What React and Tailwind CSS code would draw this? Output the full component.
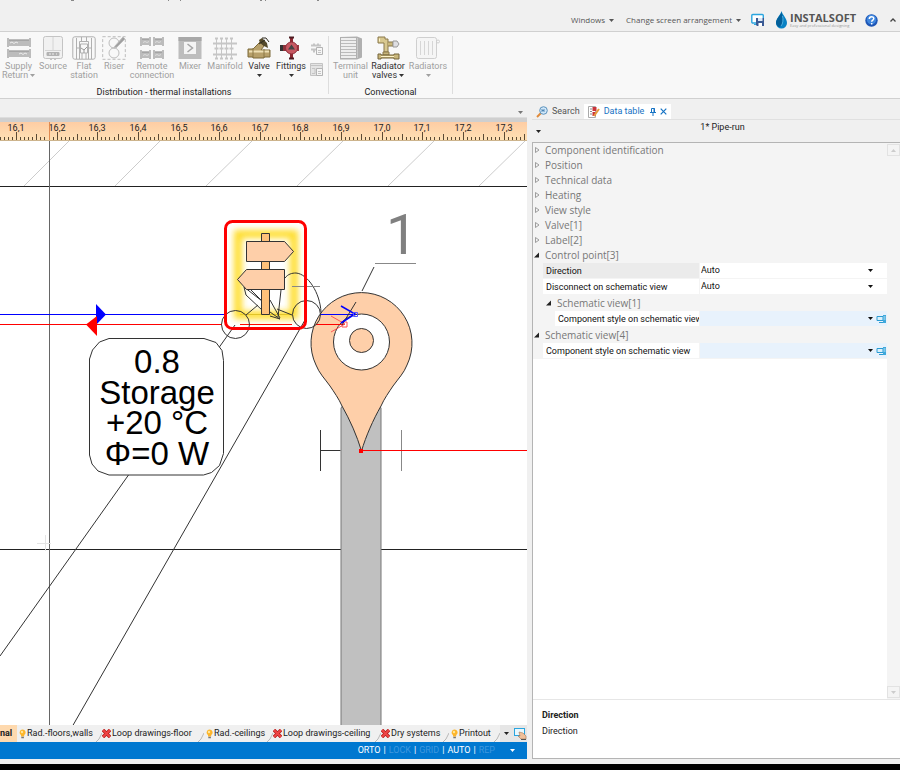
const RIBBON_GROUPS = [
  {
    title: 'Distribution - thermal installations',
    className: 'pr-1',
    tools: [
      { lines: ['Supply', 'Return'], icon: SupplyIcon, width: 'w-[37px]', menu: 'inline' },
      { lines: ['Source'], icon: SourceIcon, width: 'w-8' },
      { lines: ['Flat', 'station'], icon: StationIcon, width: 'w-[30px]' },
      { lines: ['Riser'], icon: RiserIcon, width: 'w-[30px]' },
      { lines: ['Remote', 'connection'], icon: RemoteIcon, width: 'w-[46px]' },
      { lines: ['Mixer'], icon: MixerIcon, width: 'w-[30px]' },
      { lines: ['Manifold'], icon: ManifoldIcon, width: 'w-10' },
      { lines: ['Valve'], icon: ValveIcon, width: 'w-7', menu: 'below', enabled: true },
      { lines: ['Fittings'], icon: FittingsIcon, width: 'w-9', menu: 'below', enabled: true },
    ],
    extra: true,
  },
  {
    title: 'Convectional',
    className: 'px-[3px]',
    tools: [
      { lines: ['Terminal', 'unit'], icon: TerminalIcon, width: 'w-[37px]' },
      { lines: ['Radiator', 'valves'], icon: RadiatorValveIcon, width: 'w-[38px]', menu: 'inline', enabled: true },
      { lines: ['Radiators'], icon: RadiatorsIcon, width: 'w-[42px]', menu: 'below' },
    ],
  },
]

const CLOSED_SECTIONS = [
  'Component identification',
  'Position',
  'Technical data',
  'Heating',
  'View style',
  'Valve[1]',
  'Label[2]',
]

const SHEETS = [
  { name: 'Rad.-floors,walls', icon: 'bulb', width: 'w-[85px]' },
  { name: 'Loop drawings-floor', icon: 'cross', width: 'w-[102px]' },
  { name: 'Rad.-ceilings', icon: 'bulb', width: 'w-[69px]' },
  { name: 'Loop drawings-ceiling', icon: 'cross', width: 'w-[108px]' },
  { name: 'Dry systems', icon: 'cross', width: 'w-[68px]' },
  { name: 'Printout', icon: 'bulb', width: 'w-[51px]' },
]

const MODES = [
  { name: 'ORTO', on: true },
  { name: 'LOCK', on: false },
  { name: 'GRID', on: false },
  { name: 'AUTO', on: true },
  { name: 'REP', on: false },
]

export default function App() {
  return (
    <div className="flex min-h-screen flex-col bg-[#f0f0f0] font-[Roboto,'Noto_Sans',sans-serif] text-[9px] text-[#222]">
      <TopBar />
      <Ribbon />
      <main className="flex flex-1">
        <Drawing />
        <DataPanel />
      </main>
      <div className="h-1.5 bg-black" />
    </div>
  )
}

function Caret({ className = '' }) {
  return (
    <svg viewBox="0 0 5 3" className={`h-[3px] w-[5px] shrink-0 ${className}`} fill="currentColor">
      <path d="M0 0h5L2.5 3z" />
    </svg>
  )
}

function TopBar() {
  return (
    <header className="flex h-8 items-start justify-between border-b border-[#d0d0d0]">
      {/* lower ends of the title line above */}
      <svg className="h-1 w-[330px] shrink-0" stroke="#888" fill="none">
        <path d="M71 .5h3M168.500 0v1M180.500 0v1M260 .5h2M265.500 0v1M317 .5h2" />
      </svg>
      <div className="flex items-center pt-2 pr-1 font-['Open_Sans',sans-serif] text-[8px] text-[#555]">
        <button className="flex h-6 items-center gap-1">Windows <Caret className="h-[2px] w-1" /></button>
        <button className="ml-3 flex h-6 items-center gap-1 whitespace-nowrap">Change screen arrangement <Caret className="h-[2px] w-1" /></button>
        <button aria-label="Save layout" className="ml-2.5">
          <svg width="14" height="14" viewBox="0 0 14 14">
            <rect x=".8" y="1.500" width="11.500" height="8.500" rx="1" fill="#fff" stroke="#2aa5df" strokeWidth="1.400" />
            <path d="M3 11.500h3" stroke="#2aa5df" />
            <path d="M5 5h8v8H6l-1-1z" fill="#3a5a94" />
            <path d="M7 5h4.500v3H7z" fill="#dce8f5" />
            <path d="M7.500 10h3.500v3H7.500z" fill="#fff" />
          </svg>
        </button>
        <a href="#home" className="ml-2.5 flex items-center gap-0.5">
          <svg width="13" height="18" viewBox="0 0 13 18">
            <path d="M6.500 0C7.500 4 12 7.500 12 12a5.500 5.500 0 0 1-11 0C1 7.500 5.500 4 6.500 0z" fill="#0882c4" />
            <path d="M6.500 1C7.500 5 8 8 7 13c-.5 2-2 3-3.500 3A5.500 5.500 0 0 1 1 12C1 7.500 5.500 5 6.500 1z" fill="#035f99" />
            <path d="M7.500 5c1 3 .5 8-1.500 10" stroke="#6cc3ee" strokeWidth=".7" fill="none" />
          </svg>
          <span className="flex w-[67px] flex-col">
            <span className="text-[11px] leading-[11px] font-bold">INSTALSOFT</span>
            <span className="text-[4px] leading-[5px] whitespace-nowrap text-[#999]">Easy and professional designing</span>
          </span>
        </a>
        <button aria-label="Help" className="ml-2">
          <svg width="13" height="13" viewBox="0 0 13 13">
            <circle cx="6.500" cy="6.500" r="6.200" fill="#1d55b5" />
            <circle cx="6.500" cy="5.500" r="4.800" fill="#3f86dd" />
            <path d="M4.300 5c0-3 4.500-3 4.500-.4 0 1.500-2.100 1.400-2.100 3.200M6.700 9v1.500" stroke="#fff" strokeWidth="1.500" fill="none" />
          </svg>
        </button>
        <button aria-label="Collapse ribbon" className="ml-3">
          <svg width="6" height="6" viewBox="0 0 6 6"><path d="M.5 4.500 3 2l2.500 2.500" stroke="#444" strokeWidth="1.300" fill="none" /></svg>
        </button>
      </div>
    </header>
  )
}

function Ribbon() {
  return (
    <nav className="flex h-[67px] items-stretch border-b border-[#d0d0d0] bg-[#f8f8f8] leading-[9px]">
      {RIBBON_GROUPS.map((group) => (
        <section key={group.title} className="my-1 flex flex-col border-r border-[#ddd]">
          <div className={`flex h-[47px] ${group.className}`}>
            {group.tools.map((tool) => (
              <Tool key={tool.lines[0]} {...tool} />
            ))}
            {group.extra && (
              <div className="flex w-[15px] flex-col items-center gap-2 pt-1.5">
                <SmallTool label="Component list" />
                <SmallTool label="Component table" boxed />
              </div>
            )}
          </div>
          <h2 className="pt-2 text-center">{group.title}</h2>
        </section>
      ))}
    </nav>
  )
}

function Tool({ lines, icon: Icon, width, menu, enabled }) {
  return (
    <button disabled={!enabled} className={`flex shrink-0 flex-col items-center ${width} ${enabled ? 'text-[#333]' : 'text-[#a0a0a0]'}`}>
      <Icon />
      <span className="mt-0.5 whitespace-nowrap">{lines[0]}</span>
      {lines[1] && (
        <span className="flex items-center gap-0.5 whitespace-nowrap">
          {lines[1]}
          {menu === 'inline' && <Caret />}
        </span>
      )}
      {menu === 'below' && <Caret className="mt-[3px]" />}
    </button>
  )
}

function SmallTool({ label, boxed }) {
  return (
    <button disabled aria-label={label}>
      <svg width="13" height="13" viewBox="0 0 13 13" fill="none" stroke="#c4c4c4">
        {boxed ? (
          <>
            <path d="M.5.5h12v12H.5z" fill="#e4e4e4" />
            <path d="M0 2.500h13M2 5.500h3v5H2" />
            <path d="M6.500 5.500h6v7h-6z" fill="#f6f6f6" stroke="#b4b4b4" />
            <path d="M8 8.500h3M8 10.500h3" />
          </>
        ) : (
          <>
            <path d="M1 3.500h10M1 7.500h5M3 2.500h2M7 2.500h2M3 9.500h2" strokeWidth="2" />
            <path d="M6.500 5.500h6v7h-6z" fill="#f6f6f6" stroke="#b4b4b4" />
            <path d="M8 8.500h3M8 10.500h3" />
          </>
        )}
      </svg>
    </button>
  )
}

/* ---- ribbon icons, 24px boxes ---- */

function SupplyIcon() {
  return (
    <svg width="24" height="24" viewBox="0 0 24 24" fill="#bcbcbc">
      <path d="M0 2h2v1h20V2h2v9h-2v-1H2v1H0zM0 13h2v1h20v-1h2v9h-2v-1H2v1H0z" />
      <path d="M2 4.500h20M2 15.500h20" stroke="#a5a5a5" />
      <path d="M3 7l2-1 2 1.500 2-1.500 2 1M12 18l2-1 2 1.500 2-1.500 2 1" stroke="#ececec" fill="none" />
    </svg>
  )
}

function SourceIcon() {
  return (
    <svg width="24" height="24" viewBox="0 0 24 24" fill="none" stroke="#c4c4c4">
      <rect x="2.500" y=".5" width="19" height="22" rx="2" fill="#f1f1f1" />
      <path d="M12 1v13M4 14.500h16" stroke="#d4d4d4" />
      <rect x="5.500" y="16" width="13" height="4" rx="1" fill="#b2b2b2" stroke="none" />
      <path d="M8 18h2M11 18h2M15 18h1" stroke="#eee" />
      <path d="M9 23.500h2M13 23.500h2" />
    </svg>
  )
}

function StationIcon() {
  return (
    <svg width="24" height="24" viewBox="0 0 24 24" fill="none" stroke="#b0b0b0">
      <rect x=".8" y=".8" width="22.400" height="22.400" rx="2" />
      <path d="M4.500 23V12h3V5.500h9V12h3v11M4.500 12V2M19.500 12V2M9.500 1v4M14.500 1v4M7.500 12v11M16.500 12v11M10 17v6M14 17v6" />
      <path d="M8.500 8h7v9h-7z" fill="#f8f8f8" />
      <path d="m9 12 3 2 3-3M12 14v3" stroke="#999" />
    </svg>
  )
}

function RiserIcon() {
  return (
    <svg width="24" height="24" viewBox="0 0 24 24" fill="none" stroke="#bdbdbd">
      <rect x=".7" y=".7" width="22.600" height="22.600" strokeDasharray="3 2" />
      <circle cx="12" cy="7" r="5" />
      <circle cx="12" cy="17" r="5" />
      <path d="m13 10 8-9 2 2-8 8-3 1z" fill="#a0a0a0" />
    </svg>
  )
}

function RemoteIcon() {
  return (
    <svg width="24" height="24" viewBox="0 0 24 24" fill="#bcbcbc">
      <path d="M0 1h2v1h7V1h2v9H9V9H2v1H0zM13 1h2v1h7V1h2v9h-2V9h-7v1h-2zM0 14h2v1h7v-1h2v9H9v-1H2v1H0zM13 14h2v1h7v-1h2v9h-2v-1h-7v1h-2z" />
      <path d="M2 3.500h7M15 3.500h7M2 16.500h7M15 16.500h7" stroke="#a5a5a5" />
      <path d="M3 6.500l2-1 2 1 2-1M15 6.500l2-1 2 1 2-1M3 19.500l2-1 2 1 2-1M15 19.500l2-1 2 1 2-1" stroke="#ddd" fill="none" />
    </svg>
  )
}

function MixerIcon() {
  return (
    <svg width="24" height="24" viewBox="0 0 24 24">
      <path d="M.5 1h23v22H.5z" fill="#bdbdbd" />
      <path d="M.5 1h23v4H.5z" fill="#a8a8a8" />
      <path d="M6 6h12v12H6z" fill="#f4f4f4" />
      <path d="m9.500 8 5 4-5 4" stroke="#a5a5a5" strokeWidth="1.500" fill="none" />
    </svg>
  )
}

function ManifoldIcon() {
  return (
    <svg width="24" height="24" viewBox="0 0 24 24" fill="none" stroke="#c6c6c6">
      <path d="M0 7.500h24M0 18.500h24" strokeWidth="2" />
      <path d="M3.500 2v21M8.500 2v21M13.500 2v21M18.500 2v21" />
      <path d="M2 2.500h3M7 2.500h3M12 2.500h3M17 2.500h3M1.500 12.500h4M6.500 12.500h4M11.500 12.500h4M16.500 12.500h4M2 22.500h3M7 22.500h3M12 22.500h3M17 22.500h3" strokeWidth="2" />
    </svg>
  )
}

function ValveIcon() {
  return (
    <svg width="24" height="24" viewBox="0 0 24 24">
      <path d="M1 13h5l7-7 4 4-3 4h9v7h-6v1H6v-1H1z" fill="#b7a06a" stroke="#7d6a3a" />
      <path d="M2 15.500h20" stroke="#eee0b5" strokeWidth="2" />
      <path d="M6 12v10M17 13v9" stroke="#8b7846" />
      <path d="m12 4 3-2 5 5 1 5-4-2-4-3z" fill="#544a2b" />
      <path d="M15 2h4l3 4M12 8l6-4" stroke="#2e2b20" fill="none" />
    </svg>
  )
}

function FittingsIcon() {
  return (
    <svg width="24" height="24" viewBox="0 0 24 24">
      <path d="M11 1h3v22h-3z" fill="#8e2731" />
      <path d="M10 1.500h5M10 22.500h5" stroke="#4d1c22" strokeWidth="2" />
      <path d="M3 9h5v6H3z" fill="#8d333b" />
      <path d="M1 9h3v6H1z" fill="#333" />
      <path d="M18 9h2v6h-2z" fill="#9b3941" />
      <circle cx="12.500" cy="12" r="6" fill="#c75862" stroke="#8e2f3a" />
      <path d="m12.500 8.500 3.500 5H9z" fill="#444" />
    </svg>
  )
}

function TerminalIcon() {
  return (
    <svg width="24" height="24" viewBox="0 0 24 24">
      <path d="m1 1 17-.5 5 2v19l-5 2H1z" fill="#b0b0b0" />
      <path d="M2 2h15v20H2z" fill="#eee" />
      <path d="M2 4.500h15M2 7.500h15M2 10.500h15M2 13.500h15M2 16.500h15M2 19.500h15" stroke="#bbb" />
      <path d="M18.500 2v20" stroke="#c9c9c9" />
    </svg>
  )
}

function RadiatorValveIcon() {
  return (
    <svg width="24" height="24" viewBox="0 0 24 24">
      <path d="M2 1h7v2h3v13H8V7H2z" fill="#d8c890" stroke="#8a794a" />
      <path d="M12 6h5v4h-5M7 16h6v3H7z" fill="#c8b67b" stroke="#8a794a" />
      <path d="M17 5h4l2 3-2 3h-4z" fill="#dedee2" stroke="#999" />
      <path d="M2 18h3v1h13v-1h5v5h-5v-1H5v1H2z" fill="#c8b67b" stroke="#75643a" />
      <path d="M5 20.500h13M3.500 2.500v3" stroke="#fff4c8" />
    </svg>
  )
}

function RadiatorsIcon() {
  return (
    <svg width="24" height="24" viewBox="0 0 24 24" fill="none" stroke="#cfcfcf">
      <rect x=".5" y="1.500" width="20" height="21" rx="2" fill="#f5f5f5" />
      <path d="M4.500 5v14M8.500 5v14M12.500 5v14M16.500 5v14" stroke="#d6d6d6" />
      <circle cx="22" cy="5.500" r="1.500" />
    </svg>
  )
}

/* ---- drawing area ---- */

function Drawing() {
  return (
    <section className="flex min-w-0 flex-1 flex-col pt-2 pb-[5px]">
      <div className="flex h-2.5 items-center justify-end pr-1 text-[#777]"><Caret /></div>
      <div className="flex flex-1 flex-col">
        <div className="h-[5px] border-t border-[#ddd] bg-[#cfcfcf]" />
        <Ruler />
        <div className="relative min-h-[500px] flex-1 overflow-hidden bg-white">
          <Sheet />
        </div>
        <SheetTabs />
        <StatusBar />
      </div>
    </section>
  )
}

// one tick per centimetre, a label on every tenth
function Ruler() {
  const ticks = Array.from({ length: 130 }, (_, i) => i - 4)
  return (
    <div className="h-[19px] overflow-hidden border-b border-[#cdb48c] bg-linear-to-b from-[#fecda4] to-[#fee0b4]">
      <svg className="h-full w-full" stroke="#5b4a35">
        {ticks.map((i) => {
          const x = Math.round(16 + i * 4.063) + 0.5
          const top = i % 10 === 0 ? 10 : i % 5 === 0 ? 12 : 15
          return <path key={i} d={`M${x} ${top}V18`} />
        })}
        {ticks.filter((i) => i % 10 === 0).map((i) => (
          <text key={i} x={Math.round(16 + i * 4.063)} y="9" textAnchor="middle" fontSize="9" fill="#222" stroke="none">
            {(16.1 + i / 100).toFixed(1).replace('.', ',')}
          </text>
        ))}
        <path d="M49.500 0V19" stroke="#e08a50" />
      </svg>
    </div>
  )
}

function Sheet() {
  return (
    <svg className="absolute inset-0 h-full w-full" fill="none" stroke="#333">
      <defs>
        <filter id="glow" x="-20%" y="-20%" width="140%" height="140%"><feGaussianBlur stdDeviation="3" /></filter>
      </defs>

      {/* walls */}
      <path d="M24 45 69 0M115 45 160 0M206 45 252 0M297 45 343 0M388 45 434 0M479 45 525 0" stroke="#ccc" />
      <path d="M0 45.500h3000M0 408.500h3000" stroke="#222" />
      <path d="M49.500 0v3000" stroke="#666" />
      <path d="M305 179 72 586M235 184 0 515" />
      <path d="M37 402.500h14M45.500 394v16" stroke="#e4e4e4" />

      {/* riser */}
      <path d="M341 1500V267l3-4h34l3 4v1233" fill="#c0c0c0" stroke="#777" />
      <path d="M320.500 289v41M320.500 309.500h20" />
      <path d="M401.500 289v41" stroke="#888" />

      {/* pin */}
      <path d="M361.500 310C357 295 350 279 342 265c-3-7-8-14-12-20-5-7-11-13-14-21A50.500 50.500 0 1 1 407 224c-3 8-9 14-14 21-4 6-9 13-12 20-8 14-15 30-19.500 45z" fill="#fecfa9" />
      <circle cx="361.500" cy="201" r="28" fill="#fff" />
      <circle cx="361.500" cy="199.500" r="12" fill="#fecfa9" />
      <path d="M361 309.500h3000" stroke="#f00" />
      <path d="M359 308h4v4h-4z" fill="#f00" stroke="none" />
      <path d="M374 126 362 150" />
      <path d="M375 122.500h41" stroke="#888" />
      <text x="386" y="113" fontSize="56" fontFamily="Roboto, sans-serif" fill="#808080" stroke="none">1</text>

      {/* supply and return pipes */}
      <path d="M0 173.500h226M320 173.500h36" stroke="#00f" />
      <path d="M240 173.500h52" stroke="#7a6a20" />
      <path d="M0 183.500h222M240 183.500h52M316 183.500h29" stroke="#f00" />
      <path d="M96 163v21l10-10.500z" fill="#00f" stroke="none" />
      <path d="M97 175v20l-11-11.500z" fill="#f00" stroke="none" />

      {/* room label */}
      <path d="M109 197.500h95l12 4 6 8 1.500 10v93l-4 12-8 7-8 2.500H109l-11-4-6-7-2.500-9v-96l3-9 7-8z" fill="#fff" />
      <g fontSize="33" fontFamily="Liberation Sans, Arial, sans-serif" textAnchor="middle" fill="#000" stroke="none">
        <text x="157" y="232">0.8</text>
        <text x="157" y="263">Storage</text>
        <text x="157" y="293">+20 °C</text>
        <text x="157" y="324">Φ=0 W</text>
      </g>

      {/* selected signpost */}
      <rect x="238" y="93" width="56" height="81" stroke="#fedd2a" strokeWidth="8" filter="url(#glow)" />
      <path d="M244 146l18 14M244 146l2 8 16 15M250 148l12 12M270 159l10 18M281 149l-3 27M280 178l-10-7M258 164l-12 10M277 168l15 6M270 175l10 3" />
      <path d="M285 137c3-4 7-5 11-5 12 1 24 20 25 39" />
      <path d="M292 145.500h28" stroke="#888" />
      <path d="M261.500 92.500h8v81h-8z" fill="#fdc07a" />
      <path d="M246.500 100.500h38l9 10-9 10h-38z" fill="#fecfa9" />
      <path d="M284.500 128.500h-38l-9 10 9 10h38z" fill="#fecfa9" />
      <circle cx="235.500" cy="183.500" r="14" />
      <circle cx="306.500" cy="173.500" r="14" />
      <rect x="225.500" y="80.500" width="80" height="107" rx="7" stroke="#f00" strokeWidth="3" />

      {/* flow arrows */}
      <path d="m331 175 14 8-14 8M342 181h5v5h-5z" stroke="#f55" />
      <path d="m356 161-14 23" />
      <path d="m341 165 14 8-14 9" stroke="#00f" strokeWidth="1.500" />
      <path d="M353.500 171.500h4v4h-4z" stroke="#55f" />
    </svg>
  )
}

function SheetTabs() {
  return (
    <div className="flex h-[17px] items-stretch overflow-hidden bg-[#e6e6e6]">
      <button className="flex w-[17px] shrink-0 items-center bg-[#fed9ae] font-bold">
        <span className="w-[11px]">nal</span>
      </button>
      {SHEETS.map((sheet) => (
        <button
          key={sheet.name}
          className={`flex shrink-0 items-center bg-[#f0f0f0] whitespace-nowrap ${sheet.icon === 'bulb' ? 'pl-0.5' : ''} ${sheet.width}`}
        >
          {sheet.icon === 'bulb' ? <Bulb /> : <Cross />}
          <span className="flex-1 pl-px text-left">{sheet.name}</span>
          <svg width="6" height="17" className="shrink-0" fill="none" stroke="#b8b8b8"><path d="M6 8 3 14l-3 3" /></svg>
        </button>
      ))}
      <div className="ml-auto flex items-center gap-1">
        <button aria-label="All sheets"><Caret /></button>
        <button aria-label="Select on screen">
          <svg width="14" height="13" viewBox="0 0 14 13">
            <rect x="1.500" y="1.500" width="10" height="7" fill="#e9f7fd" stroke="#2aa5df" />
            <path d="m6 5 4 1 3 3v3H8L5 9h2z" fill="#f0c09a" stroke="#a57858" strokeWidth=".6" />
            <path d="M8 12.500h5" stroke="#555" />
          </svg>
        </button>
      </div>
    </div>
  )
}

function Bulb() {
  return (
    <svg width="7" height="10" viewBox="0 0 7 10" className="shrink-0">
      <path d="M3.500.5a3 3 0 0 1 1.700 5.500V7.500H2V6A3 3 0 0 1 3.500.5z" fill="#fdb52a" />
      <circle cx="3" cy="3" r="1.200" fill="#ffe79a" />
      <path d="M2.300 8.500h2.600" stroke="#777" strokeWidth="1.500" />
    </svg>
  )
}

function Cross() {
  return (
    <svg width="9" height="9" viewBox="0 0 9 9" className="shrink-0">
      <path d="m1 1 7 7M8 1 1 8" stroke="#b01c1c" strokeWidth="3.400" />
      <path d="m1 1 7 7M8 1 1 8" stroke="#ee4444" strokeWidth="2" />
    </svg>
  )
}

function StatusBar() {
  return (
    <footer className="flex h-[17px] items-center justify-end gap-[3px] bg-[#0078d0] pr-3 text-white">
      {MODES.map((mode, i) => (
        <span key={mode.name} className="flex items-center gap-[3px]">
          {i > 0 && <span>|</span>}
          <button className={mode.on ? 'text-white' : 'text-[#3f97de]'}>{mode.name}</button>
        </span>
      ))}
      <button aria-label="More modes" className="ml-3"><Caret /></button>
    </footer>
  )
}

/* ---- data table panel ---- */

function DataPanel() {
  return (
    <aside className="ml-[5px] flex w-[368px] shrink-0 flex-col pt-[5px] pb-[5px]">
      <div className="flex h-[15px] items-stretch">
        <button className="flex items-center gap-1 px-1 text-[#555]">
          <svg width="12" height="12" viewBox="0 0 12 12" fill="none">
            <path d="M1 11l4-4" stroke="#e08a3a" strokeWidth="2" />
            <circle cx="7.500" cy="4.500" r="3.800" fill="#cfe6f8" stroke="#5d93bd" />
            <path d="M6 3v3M6 4.500h2M8 3v3" stroke="#3c78aa" strokeWidth=".8" />
          </svg>
          Search
        </button>
        <div className="flex items-center gap-1 bg-white px-1 text-[#1673c4]">
          <svg width="12" height="12" viewBox="0 0 12 12" fill="none">
            <path d="M.5.500h7v11h-7z" fill="#fff" stroke="#aaa" />
            <path d="M2 3h2M2 5.500h2M2 8h2" stroke="#888" />
            <path d="M4.500 1h4v4h-4zM4.500 6h3v4h-3z" fill="#c9343a" />
            <path d="m11 3-5 7" stroke="#e79a3c" strokeWidth="2" />
          </svg>
          <button>Data table</button>
          <button aria-label="Pin" className="ml-0.5">
            <svg width="6" height="8" viewBox="0 0 6 8" fill="none" stroke="currentColor"><path d="M1.500.5h3v4h-3zM0 4.500h6M3 5v3M4 0v4" /></svg>
          </button>
          <button aria-label="Close">
            <svg width="7" height="7" viewBox="0 0 7 7" fill="none" stroke="currentColor" strokeWidth="1.200"><path d="m.7.700 5.600 5.600M6.300.7.700 6.300" /></svg>
          </button>
        </div>
      </div>

      <div className="flex h-[23px] items-start border-t border-[#e0e0e0] pt-px">
        <button aria-label="Table menu" className="pt-[9px] pl-1"><Caret /></button>
        <h1 className="flex-1 pl-1 text-center leading-3">1* Pipe-run</h1>
      </div>

      <div className="flex flex-1 flex-col border-y border-l border-[#b4b4b4] bg-white">
        <div className="flex flex-1">
          <div className="min-w-0 flex-1">
            <PropertyTree />
          </div>
          <div className="flex w-[13px] flex-col justify-between bg-[#f4f4f4] py-px text-[#ccc]">
            <button aria-label="Scroll up" className="flex h-3 items-center justify-center border border-[#e2e2e2]"><Caret className="rotate-180" /></button>
            <button aria-label="Scroll down" className="flex h-3 items-center justify-center border border-[#e2e2e2]"><Caret /></button>
          </div>
        </div>
        <div className="h-[59px] border-t border-[#e6e6e6] pt-[7px] pl-[9px] leading-[16px]">
          <p className="font-bold">Direction</p>
          <p>Direction</p>
        </div>
      </div>
    </aside>
  )
}

function PropertyTree() {
  return (
    <div className="bg-[#f4f4f4]">
      {CLOSED_SECTIONS.map((name) => (
        <SectionRow key={name} name={name} className="h-[15px] pb-0.5" />
      ))}
      <SectionRow name="Control point[3]" open className="h-[15px] pb-0.5" />
      <PropertyRow id="direction" label="Direction" value="Auto" active />
      <PropertyRow id="disconnect" label="Disconnect on schematic view" value="Auto" />
      <SectionRow name="Schematic view[1]" open className="h-4 pl-3" />
      <PropertyRow id="style-1" label="Component style on schematic view" nested />
      <SectionRow name="Schematic view[4]" open className="h-4" />
      <PropertyRow id="style-4" label="Component style on schematic view" />
    </div>
  )
}

function SectionRow({ name, open, className }) {
  return (
    <button
      aria-expanded={Boolean(open)}
      className={`flex w-full items-center font-['Open_Sans',sans-serif] text-[10px] leading-none text-[#777] ${className}`}
    >
      <svg width="6" height="6" viewBox="0 0 6 6" className="mr-[5px] ml-px shrink-0">
        {open ? <path d="M5 .5v5H0z" fill="#222" /> : <path d="M1.500.5 5 3 1.500 5.500z" fill="none" stroke="#888" strokeWidth=".8" />}
      </svg>
      {name}
    </button>
  )
}

function PropertyRow({ id, label, value, active, nested }) {
  return (
    <div className={`flex h-4 border-b border-[#f4f4f4] leading-none text-[#111] ${nested ? 'pl-[22px]' : 'pl-2.5'}`}>
      <label
        htmlFor={id}
        className={`flex shrink-0 items-center overflow-hidden pl-[3px] whitespace-nowrap ${nested ? 'w-[144px]' : 'w-[156px]'} ${active ? 'bg-[#ebebeb]' : 'bg-white'}`}
      >
        <span className="overflow-hidden pr-0.5 leading-3">{label}</span>
      </label>
      <div className={`ml-px flex min-w-0 flex-1 items-center ${value ? 'bg-white pr-3.5' : 'bg-[#e8f2fc]'}`}>
        <select id={id} defaultValue={value ?? ''} className="h-full min-w-0 flex-1 appearance-none pl-px outline-none">
          <option>{value ?? ''}</option>
        </select>
        <Caret />
        {!value && (
          <button aria-label="Choose style" className="ml-[3px]">
            <svg width="11" height="10" viewBox="0 0 11 10">
              <path d="M1 2.500h6v4H1zM3 8.500h4" fill="#d9f0fb" stroke="#2a9bd4" />
              <path d="M7 1h3v8H7z" fill="#3fa9dc" />
              <path d="M7.500 3h2M7.500 5h2" stroke="#fff" strokeWidth=".7" />
            </svg>
          </button>
        )}
      </div>
    </div>
  )
}
